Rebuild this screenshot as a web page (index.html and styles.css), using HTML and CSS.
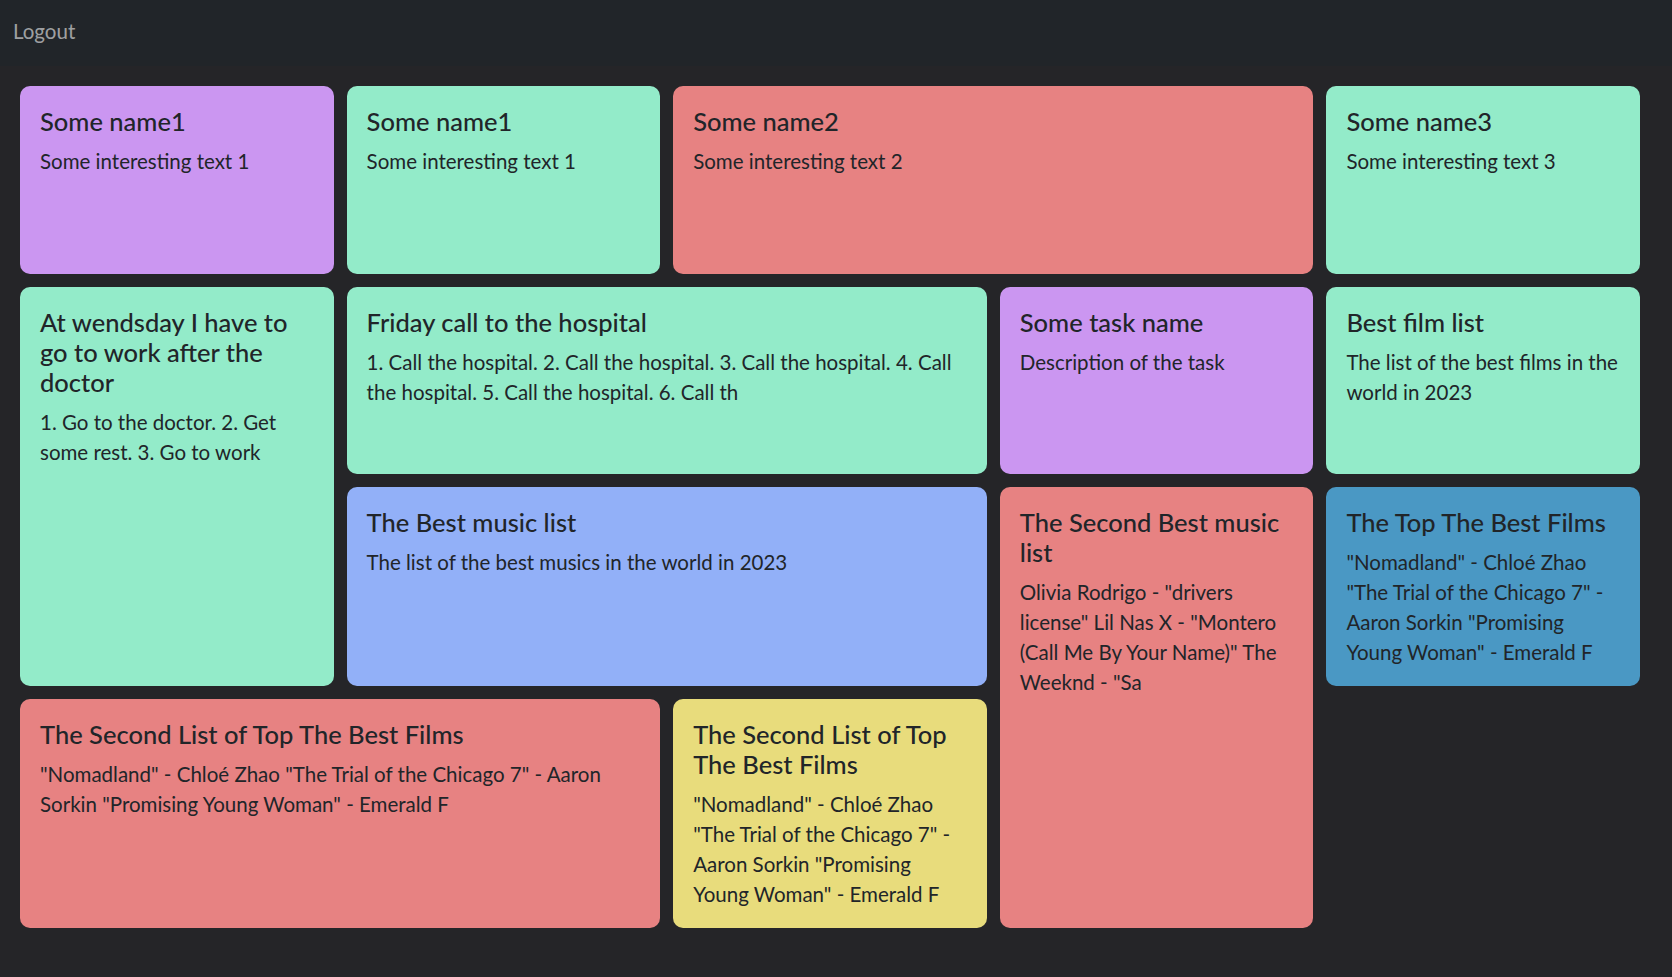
FILE: index.html
```html
<!DOCTYPE html>
<html lang="en">
<head>
<meta charset="utf-8">
<title>Notes</title>
<link rel="stylesheet" href="styles.css">
</head>
<body>
<nav class="navbar">
  <a class="nav-link" href="#">Logout</a>
</nav>
<main class="board">
  <div class="card purple c1 r1"><h5>Some name1</h5><p>Some interesting text 1</p></div>
  <div class="card green c2 r1"><h5>Some name1</h5><p>Some interesting text 1</p></div>
  <div class="card red c34 r1"><h5>Some name2</h5><p>Some interesting text 2</p></div>
  <div class="card green c5 r1"><h5>Some name3</h5><p>Some interesting text 3</p></div>

  <div class="card green c1 r23"><h5>At wendsday I have to go to work after the doctor</h5><p>1. Go to the doctor. 2. Get some rest. 3. Go to work</p></div>
  <div class="card green c23 r2"><h5>Friday call to the hospital</h5><p>1. Call the hospital. 2. Call the hospital. 3. Call the hospital. 4. Call the hospital. 5. Call the hospital. 6. Call th</p></div>
  <div class="card purple c4 r2"><h5>Some task name</h5><p>Description of the task</p></div>
  <div class="card green c5 r2"><h5>Best film list</h5><p>The list of the best films in the world in 2023</p></div>

  <div class="card sky c23 r3"><h5>The Best music list</h5><p>The list of the best musics in the world in 2023</p></div>
  <div class="card red c4 r34"><h5>The Second Best music list</h5><p>Olivia Rodrigo - "drivers license" Lil Nas X - "Montero (Call Me By Your Name)" The Weeknd - "Sa</p></div>
  <div class="card blue c5 r3"><h5>The Top The Best Films</h5><p>"Nomadland" - Chloé Zhao "The Trial of the Chicago 7" - Aaron Sorkin "Promising Young Woman" - Emerald F</p></div>

  <div class="card red c12 r4"><h5>The Second List of Top The Best Films</h5><p>"Nomadland" - Chloé Zhao "The Trial of the Chicago 7" - Aaron Sorkin "Promising Young Woman" - Emerald F</p></div>
  <div class="card yellow c3 r4"><h5>The Second List of Top The Best Films</h5><p>"Nomadland" - Chloé Zhao "The Trial of the Chicago 7" - Aaron Sorkin "Promising Young Woman" - Emerald F</p></div>
</main>
</body>
</html>
```
FILE: styles.css
```css
* { box-sizing: border-box; }
html, body { margin: 0; padding: 0; }
body {
  background: #252528;
  font-family: Lato, "Noto Sans", sans-serif;
  font-size: 20px;
  line-height: 1.5;
  color: #212529;
  min-height: 977px;
}
.navbar {
  background: #212529;
  height: 66px;
  display: flex;
  align-items: center;
  padding: 0 13px 4px;
}
.nav-link {
  color: rgba(255,255,255,.58);
  text-decoration: none;
  font-size: 20.5px;
}
.board {
  display: grid;
  grid-template-columns: repeat(5, 1fr);
  grid-template-rows: 188px 187px 199px 229px;
  gap: 13px;
  padding: 20px 32px 0 20px;
}
.card {
  border-radius: 10px;
  padding: 20px;
}
.card h5 {
  margin: 0 0 10px;
  font-size: 25.5px;
  font-weight: 500;
  line-height: 30px;
}
.card p {
  margin: 0;
  font-size: 20.5px;
  line-height: 30px;
}
.purple { background: #cb96f1; }
.green { background: #93ebc9; }
.red { background: #e78282; }
.sky { background: #92b0f8; }
.blue { background: #4a98c4; }
.yellow { background: #e8dc7c; }
.c1 { grid-column: 1; }
.c2 { grid-column: 2; }
.c3 { grid-column: 3; }
.c4 { grid-column: 4; }
.c5 { grid-column: 5; }
.c12 { grid-column: 1 / 3; }
.c23 { grid-column: 2 / 4; }
.c34 { grid-column: 3 / 5; }
.r1 { grid-row: 1; }
.r2 { grid-row: 2; }
.r3 { grid-row: 3; }
.r4 { grid-row: 4; }
.r23 { grid-row: 2 / 4; }
.r34 { grid-row: 3 / 5; }
```
